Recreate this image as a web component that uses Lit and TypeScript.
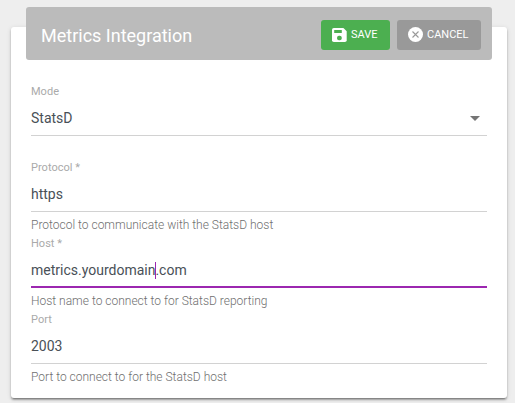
import { LitElement, html, css, svg, nothing } from "lit";
import { customElement, property } from "lit/decorators.js";
import { classMap } from "lit/directives/class-map.js";

@customElement("form-field")
class FormField extends LitElement {
  @property() label = "";
  @property() value = "";
  @property() hint = "";
  @property({ type: Number }) caret = -1;
  @property({ type: Boolean }) select = false;

  static styles = css`
    :host {
      display: block;
      height: 76px;
    }
    .label {
      height: 14px;
      line-height: 14px;
      font-size: 11px;
      color: #aaa;
      letter-spacing: 0.02px;
    }
    .control {
      display: flex;
      align-items: center;
      justify-content: space-between;
      height: 37px;
      box-sizing: border-box;
      padding-top: 3px;
      border-bottom: 1px solid #d2d2d2;
    }
    .control.focused {
      padding-top: 4px;
      border-bottom: 2px solid #9c27b0;
    }
    .value {
      font-size: 14px;
      line-height: 17px;
      color: #495057;
      white-space: pre;
    }
    .caret {
      display: inline-block;
      width: 1px;
      height: 17px;
      margin-right: -1px;
      vertical-align: top;
      background: #9c27b0;
    }
    .arrow {
      width: 10px;
      height: 5px;
      margin-right: 7px;
      fill: #757575;
    }
    .hint {
      height: 16px;
      line-height: 16px;
      margin-top: 5px;
      font-size: 12px;
      font-weight: 300;
      color: #6f6f6f;
    }
  `;

  render() {
    const focused = this.caret >= 0;
    return html`
      <div class="label">${this.label}</div>
      <div class=${classMap({ control: true, focused })}>
        <span class="value"
          >${focused
            ? html`${this.value.slice(0, this.caret)}<i class="caret"></i>${this.value.slice(this.caret)}`
            : this.value}</span
        >
        ${this.select
          ? html`<svg class="arrow" viewBox="0 0 10 5"><path d="M0 0h10L5 5z" /></svg>`
          : nothing}
      </div>
      ${this.hint ? html`<div class="hint">${this.hint}</div>` : nothing}
    `;
  }
}

const saveIcon = svg`
  <path fill="#fff" d="M1.8 0H11.4L14.7 3.3V12.2Q14.7 14 12.9 14H1.8Q0 14 0 12.2V1.8Q0 0 1.8 0Z" />
  <path class="cut" d="M2.2 2h7.6v3H2.2z" />
  <rect class="cut" x="5.1" y="7.8" width="4.6" height="4.4" rx="1.8" />`;

const cancelIcon = svg`
  <circle fill="#fff" cx="7.5" cy="7.5" r="7.5" />
  <path class="line" d="M4.5 4.5l6 6M10.5 4.5l-6 6" />`;

@customElement("app-root")
class AppRoot extends LitElement {
  static styles = css`
    :host {
      display: block;
      box-sizing: border-box;
      height: 403px;
      padding: 27px 8px 5px 11px;
      overflow: hidden;
      background: #eee;
      font-family: Roboto, sans-serif;
    }
    .card {
      height: 371px;
      border-radius: 3px;
      background: #fff;
      box-shadow: 0 2px 2px rgba(0, 0, 0, 0.28), 0 3px 1px -2px rgba(0, 0, 0, 0.2),
        0 1px 5px rgba(0, 0, 0, 0.12);
      display: flow-root;
    }
    .header {
      display: flex;
      align-items: center;
      gap: 7px;
      box-sizing: border-box;
      height: 53px;
      margin: -20px 15px 0;
      padding: 2px 11px 0 15px;
      border-radius: 3px;
      background: #bbb;
      color: #fff;
    }
    .title {
      flex: 1;
      margin: 0;
      padding-top: 2px;
      font-size: 18px;
      font-weight: 400;
      line-height: 24px;
    }
    .button {
      display: flex;
      align-items: center;
      box-sizing: border-box;
      height: 30px;
      padding: 0 0 0 11px;
      border: 0;
      border-radius: 3px;
      color: #fff;
      font: 400 11px/16px Roboto, sans-serif;
      text-transform: uppercase;
    }
    .save {
      width: 69px;
      gap: 4px;
      background: #4caf50;
    }
    .cancel {
      width: 84px;
      gap: 4px;
      padding-left: 11px;
      background: #999;
    }
    .icon {
      flex: none;
      overflow: visible;
    }
    .cut {
      fill: #4caf50;
    }
    .line {
      fill: none;
      stroke: #999;
      stroke-width: 1.1;
    }
    .form {
      padding: 25px 20px 0;
    }
  `;

  render() {
    return html`
      <section class="card">
        <header class="header">
          <h4 class="title">Metrics Integration</h4>
          <button class="button save">
            <svg class="icon" width="15" height="14" viewBox="0 0 15 14">${saveIcon}</svg>
            <span>Save</span>
          </button>
          <button class="button cancel">
            <svg class="icon" width="15" height="15" viewBox="0 0 15 15">${cancelIcon}</svg>
            <span>Cancel</span>
          </button>
        </header>
        <div class="form">
          <form-field label="Mode" value="StatsD" select></form-field>
          <form-field label="Protocol *" value="https" hint="Protocol to communicate with the StatsD host"></form-field>
          <form-field
            label="Host *"
            value="metrics.yourdomain.com"
            hint="Host name to connect to for StatsD reporting"
            caret="18"
          ></form-field>
          <form-field label="Port" value="2003" hint="Port to connect to for the StatsD host"></form-field>
        </div>
      </section>
    `;
  }
}
